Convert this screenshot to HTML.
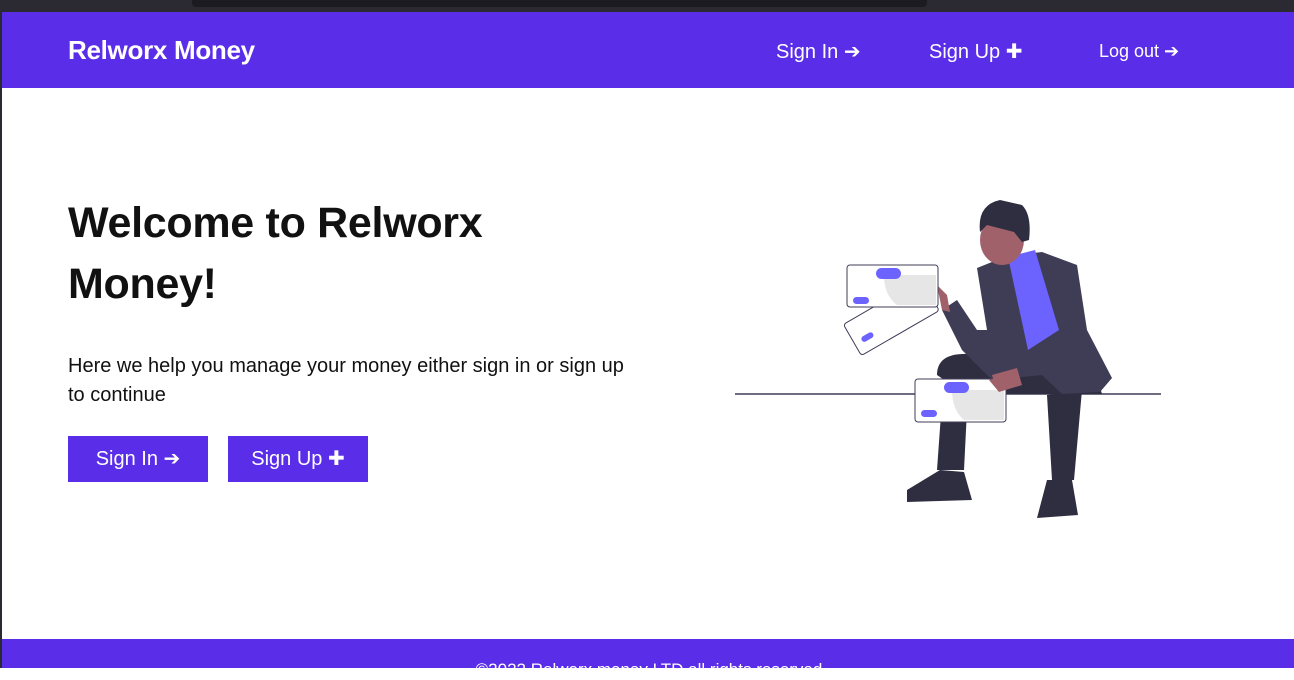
<!DOCTYPE html>
<html><head><meta charset="utf-8"><style>
*{margin:0;padding:0;box-sizing:border-box}
body{width:1294px;height:668px;overflow:hidden;background:#fff;font-family:"Liberation Sans",sans-serif;position:relative;border-left:2px solid #2b2a33}
.top{position:absolute;left:0;top:0;width:1294px;height:12px;background:#2b2a33}
.tab{position:absolute;left:190px;top:0;width:735px;height:7px;background:#1c1b22;border-radius:0 0 4px 4px}
nav{position:absolute;left:0;top:12px;width:1294px;height:76px;background:#5a2de8;color:#fff}
.brand{position:absolute;left:66px;top:23px;font-size:26px;font-weight:bold;letter-spacing:-0.3px}
.nl{position:absolute;top:27px;font-size:20px}
h1{position:absolute;left:66px;top:193px;font-size:43px;line-height:61px;font-weight:bold;color:#111;width:480px;letter-spacing:-0.3px}
p{position:absolute;left:66px;top:352px;font-size:20px;line-height:29px;color:#111;width:575px}
.btn{position:absolute;top:436px;height:46px;width:140px;background:#5a2de8;color:#fff;font-size:20px;text-align:center;line-height:46px}
footer{position:absolute;left:0;top:639px;width:1294px;height:29px;background:#5a2de8;color:#fff;font-size:17px;text-align:center;padding-top:21px}
</style></head><body>
<div class="top"><div class="tab"></div></div>
<nav><div class="brand">Relworx Money</div>
<div class="nl" style="left:774px">Sign In ➔</div>
<div class="nl" style="left:927px">Sign Up ✚</div>
<div class="nl" style="left:1097px;font-size:18px;top:29px">Log out ➔</div></nav>
<h1>Welcome to Relworx Money!</h1>
<p>Here we help you manage your money either sign in or sign up to continue</p>
<div class="btn" style="left:66px">Sign In ➔</div>
<div class="btn" style="left:226px">Sign Up ✚</div>
<svg style="position:absolute;left:0;top:0" width="1294" height="668">
<line x1="733" y1="394" x2="1159" y2="394" stroke="#3f3d56" stroke-width="1.5"/>
<path d="M940 400 L935 470 L962 470 L965 410 Z M1045 395 L1050 480 L1072 480 L1080 390 Z" fill="#2f2e41"/>
<path d="M905 490 L938 470 L962 472 L970 500 L905 502 Z M1045 480 L1070 480 L1076 515 L1035 518 Z" fill="#2f2e41"/>
<path d="M935 375 Q935 355 960 354 L1040 352 L1090 360 L1100 394 L1010 394 L960 392 Z" fill="#2f2e41"/>
<path d="M975 268 L1005 256 L1040 252 L1075 265 L1085 330 L1110 378 L1098 392 L1060 394 L1040 375 L990 380 L960 350 L960 330 L985 330 Z" fill="#3f3d56"/>
<path d="M940 310 L955 300 L975 330 L960 350 Z" fill="#3f3d56"/>
<path d="M1006 257 L1033 250 L1057 330 L1026 350 Z" fill="#6c63ff"/>
<ellipse cx="1000" cy="240" rx="22" ry="25" fill="#a0616a"/>
<path d="M978 232 Q975 205 998 200 L1020 205 Q1030 215 1027 240 L1020 242 L1012 232 L985 225 Z" fill="#2f2e41"/>
<path d="M935 285 L945 295 L948 312 L940 310 Z M990 375 L1015 368 L1020 385 L995 392 Z" fill="#a0616a"/>
<g transform="rotate(-30 885 320)"><rect x="845" y="302" width="90" height="36" rx="3" fill="#fff" stroke="#3f3d56"/><rect x="853" y="322" width="13" height="6" rx="3" fill="#6c63ff"/></g>
<rect x="845" y="265" width="91" height="42" rx="3" fill="#fff" stroke="#3f3d56"/>
<path d="M882 275 L934 275 L934 305 L895 305 Q882 295 882 275Z" fill="#e6e6e6"/>
<rect x="874" y="268" width="25" height="11" rx="5.5" fill="#6c63ff"/>
<rect x="851" y="297" width="16" height="7" rx="3.5" fill="#6c63ff"/>
<rect x="913" y="379" width="91" height="43" rx="3" fill="#fff" stroke="#3f3d56"/>
<path d="M950 390 L1002 390 L1002 420 L962 420 Q950 410 950 390Z" fill="#e6e6e6"/>
<rect x="942" y="382" width="25" height="11" rx="5.5" fill="#6c63ff"/>
<rect x="919" y="410" width="16" height="7" rx="3.5" fill="#6c63ff"/>
<path d="M987 380 L1012 372 L1020 385 L997 392 Z" fill="#a0616a"/>
</svg>
<footer>©2022 Relworx money LTD all rights reserved</footer>
</body></html>
